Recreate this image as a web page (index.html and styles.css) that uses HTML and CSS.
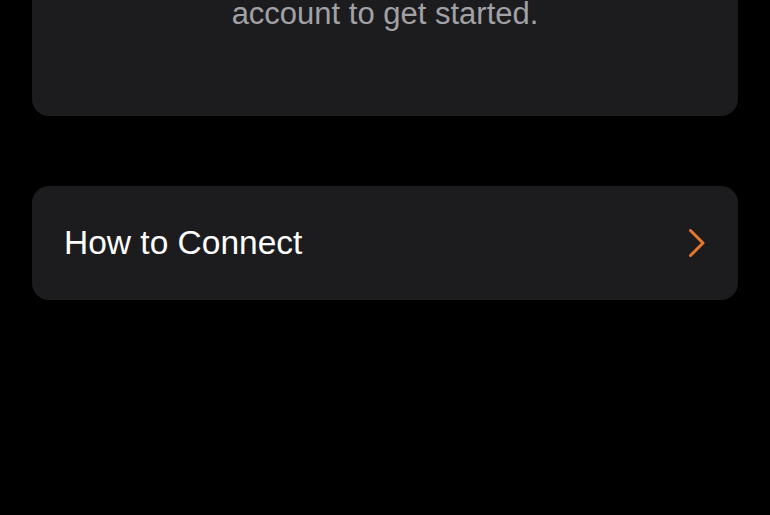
FILE: index.html
```html
<!DOCTYPE html>
<html lang="en">
<head>
<meta charset="utf-8">
<title>How to Connect</title>
<link rel="stylesheet" href="styles.css">
</head>
<body>
<main class="page">
  <section class="card intro">
    <p class="intro-text">account to get started.</p>
  </section>
  <a class="card row" href="#">
    <span class="row-label">How to Connect</span>
    <svg class="chevron" width="18" height="30" viewBox="0 0 18 30" aria-hidden="true">
      <path d="M2.5 2.5 L15 15 L2.5 27.5" fill="none" stroke="#e8772e" stroke-width="3" stroke-linecap="round" stroke-linejoin="round"/>
    </svg>
  </a>
</main>
</body>
</html>
```
FILE: styles.css
```css
html, body {
  margin: 0;
  padding: 0;
  background: #000;
  height: 100%;
  overflow: hidden;
}
body {
  font-family: "Liberation Sans", Arial, sans-serif;
}
.page {
  padding: 0 32px;
  display: flex;
  flex-direction: column;
}
.card {
  background: #1c1c1e;
  border-radius: 17px;
}
.intro {
  margin-top: -40px;
  padding: 35px 20px 83px;
}
.intro-text {
  margin: 0;
  text-align: center;
  color: #a1a1a6;
  font-size: 31px;
  line-height: 38px;
}
.row {
  margin-top: 70px;
  height: 114px;
  display: flex;
  align-items: center;
  justify-content: space-between;
  padding: 0 32px 0 32px;
  text-decoration: none;
}
.row-label {
  color: #fff;
  font-size: 33.5px;
  line-height: 34px;
}
.chevron {
  display: block;
  flex: none;
}
```
